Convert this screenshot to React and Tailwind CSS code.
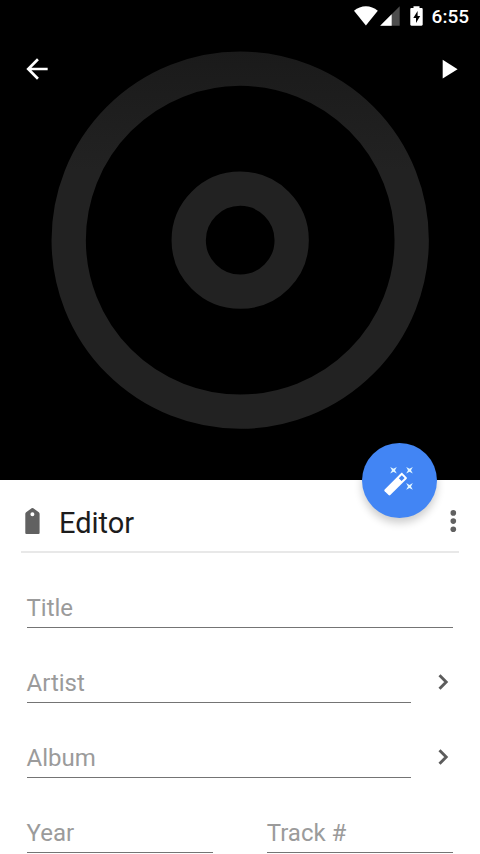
function StatusBar() {
  return (
    <div className="flex h-8 items-center justify-end pr-[11px] text-white">
      <svg className="h-8 w-[72px] shrink-0" viewBox="352 0 72 32" fill="currentColor">
        <path d="M354 10.7C357.5 7.7 361.6 6.2 365.9 6.2s8.4 1.5 11.9 4.5L365.9 25.5Z" />
        <path d="M399.7 6.2V25.7H380.2Z" opacity=".3" />
        <path d="M391.7 14.2V25.7H380.2Z" />
        <path
          fillRule="evenodd"
          d="M413.5 6.2h6v1.9h2c.7 0 1.2.5 1.2 1.2v15.2c0 .7-.5 1.2-1.2 1.2h-10c-.7 0-1.2-.5-1.2-1.2V9.3c0-.7.5-1.2 1.2-1.2h2ZM417.6 11l-4.3 7h2.7v5l4.2-7h-2.6Z"
        />
      </svg>
      <span className="ml-2 pt-0.5 text-[19px] font-medium leading-8">6:55</span>
    </div>
  );
}

function Toolbar() {
  return (
    <div className="flex items-center justify-between pt-[21px] pr-4 pl-[21px] text-white">
      <button type="button" aria-label="Back">
        <svg className="size-8" viewBox="0 0 24 24" fill="currentColor">
          <path d="M20 11H7.83l5.59-5.59L12 4l-8 8 8 8 1.41-1.41L7.83 13H20z" />
        </svg>
      </button>
      <button type="button" aria-label="Play">
        <svg className="size-8" viewBox="0 0 24 24" fill="currentColor">
          <path d="M8 5v14.2l11.2-7.1z" />
        </svg>
      </button>
    </div>
  );
}

function Disc() {
  return (
    <svg className="absolute inset-0 size-full" viewBox="0 0 480 480" fill="none">
      <defs>
        <linearGradient id="disc" gradientUnits="userSpaceOnUse" x1="0" y1="50" x2="0" y2="170">
          <stop offset="0" stopColor="#1a1a1a" />
          <stop offset="1" stopColor="#222222" />
        </linearGradient>
      </defs>
      <circle cx="240.2" cy="240.2" r="171.5" stroke="url(#disc)" strokeWidth="34.3" />
      <circle cx="240.2" cy="240.2" r="51.5" stroke="#222222" strokeWidth="34.3" />
    </svg>
  );
}

function MagicButton() {
  return (
    <button
      type="button"
      aria-label="Auto tag"
      className="absolute right-[42.6px] -bottom-[38px] flex size-[75px] items-center justify-center rounded-full bg-[#4285f4] shadow-[0_5px_8px_rgba(0,0,0,0.2)]"
    >
      <svg className="size-[75px]" viewBox="362.5 443 75 75">
        <path
          d="M403.1 473.3l3.9 3.9c.6.6.6 1.1 0 1.7l-16.2 16.2c-.6.6-1.1.6-1.7 0l-3.9-3.9c-.6-.6-.6-1.1 0-1.7l16.2-16.2c.6-.6 1.1-.6 1.7 0Z"
          fill="#ffffff"
        />
        <path d="M402.3 475.2l2.8 2.8-3 3-2.8-2.8Z" fill="#4285f4" />
        <g fill="#e3f7ff">
          <path id="spark" d="M390.7 466.9l3.3 1.8 3.3-1.8-1.8 3.3 1.8 3.3-3.3-1.8-3.3 1.8 1.8-3.3Z" />
          <use href="#spark" x="16" />
          <use href="#spark" x="16" y="16.2" />
        </g>
      </svg>
    </button>
  );
}

function Header() {
  return (
    <div className="mx-[21px] flex h-[73px] items-center border-b-2 border-[#e8e8e8] pt-2.5 pl-1">
      <svg className="h-[26px] w-[15px]" viewBox="0 0 15 26" fill="#616161">
        <path
          fillRule="evenodd"
          transform="translate(.3 0)"
          d="M7 0Q7.5 0 8 .3L13.5 4.2Q14.3 4.9 14.3 5.9V24.9Q14.3 26 13.2 26H1.1Q0 26 0 24.9V5.9Q0 4.9.8 4.2L6.3.3Q6.7 0 7 0ZM7.1 4.2a2 2 0 1 0 0 4 2 2 0 0 0 0-4Z"
        />
      </svg>
      <h1 className="ml-[19px] flex-1 pt-1 text-[29px] leading-8 text-[#1c1c1c]">Editor</h1>
      <button type="button" aria-label="More">
        <svg className="h-8 w-3" viewBox="0 0 12 32" fill="#616161">
          <circle cx="6.3" cy="7.9" r="2.8" />
          <circle cx="6.3" cy="16.1" r="2.8" />
          <circle cx="6.3" cy="24.3" r="2.8" />
        </svg>
      </button>
    </div>
  );
}

function Field({ label }) {
  return (
    <div className="h-[38px] flex-1 border-b border-[#747474] text-2xl leading-[37px] text-[#9b9b9b]">
      {label}
    </div>
  );
}

function Chevron() {
  return (
    <svg className="ml-[21px] h-8 w-[21px] shrink-0" viewBox="0 0 21 32" fill="none">
      <path d="M7.5 10.2L14.2 17L7.5 23.8" stroke="#5c5c5c" strokeWidth="2.9" />
    </svg>
  );
}

export default function App() {
  return (
    <div className="h-[854px] w-[480px] overflow-hidden bg-white font-['Roboto',sans-serif]">
      <section className="relative h-[480px] bg-black">
        <Disc />
        <div className="relative">
          <StatusBar />
          <Toolbar />
        </div>
        <MagicButton />
      </section>

      <Header />

      <div className="flex flex-col gap-[37px] pt-[37px] pr-[27px] pl-[26.5px]">
        <div className="flex">
          <Field label="Title" />
        </div>
        {['Artist', 'Album'].map((label) => (
          <div key={label} className="flex">
            <Field label={label} />
            <Chevron />
          </div>
        ))}
        <div className="flex gap-[54px]">
          <Field label="Year" />
          <Field label="Track #" />
        </div>
      </div>
    </div>
  );
}
